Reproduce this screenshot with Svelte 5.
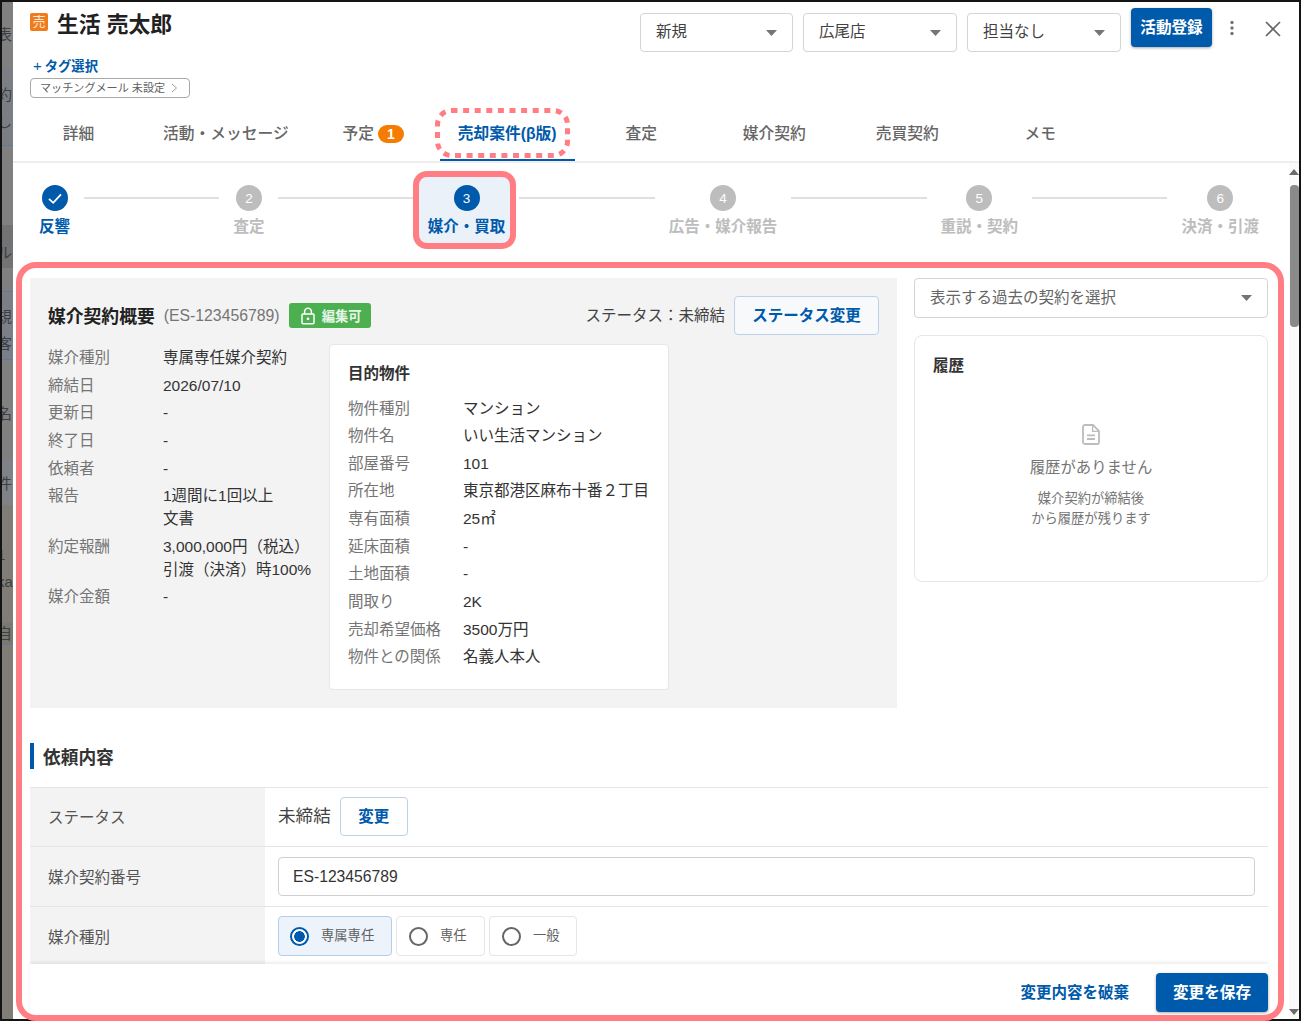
<script>
	const tabs = ['詳細', '活動・メッセージ', '予定', '売却案件(β版)', '査定', '媒介契約', '売買契約', 'メモ'];
	const steps = [
		{ n: 1, label: '反響', state: 'done' },
		{ n: 2, label: '査定', state: '' },
		{ n: 3, label: '媒介・買取', state: 'active' },
		{ n: 4, label: '広告・媒介報告', state: '' },
		{ n: 5, label: '重説・契約', state: '' },
		{ n: 6, label: '決済・引渡', state: '' }
	];
	const contract = [
		['媒介種別', ['専属専任媒介契約']],
		['締結日', ['2026/07/10']],
		['更新日', ['-']],
		['終了日', ['-']],
		['依頼者', ['-']],
		['報告', ['1週間に1回以上', '文書']],
		['約定報酬', ['3,000,000円（税込）', '引渡（決済）時100%']],
		['媒介金額', ['-']]
	];
	const property = [
		['物件種別', 'マンション'],
		['物件名', 'いい生活マンション'],
		['部屋番号', '101'],
		['所在地', '東京都港区麻布十番２丁目'],
		['専有面積', '25㎡'],
		['延床面積', '-'],
		['土地面積', '-'],
		['間取り', '2K'],
		['売却希望価格', '3500万円'],
		['物件との関係', '名義人本人']
	];
	const selects = ['新規', '広尾店', '担当なし'];
	const radios = [
		{ label: '専属専任', w: 114, on: true },
		{ label: '専任', w: 89, on: false },
		{ label: '一般', w: 88, on: false }
	];
	// dimmed page behind the modal, only the left edge is visible
	const bands = [
		{ h: 66, c: '#808080', t: '表', pt: 0 },
		{ h: 78, c: '#7b7f85', t: '約', t2: 'し', line: true, pt: 4 },
		{ h: 79, c: '#808080', t: '', pt: 0 },
		{ h: 43, c: '#737373', t: 'ル', pt: 12 },
		{ h: 24, c: '#808080', t: '', line: true, pt: 0 },
		{ h: 68, c: '#7b7f88', t: '規', t2: '客', line: true, pt: 10 },
		{ h: 100, c: '#808080', t: '名', pt: 8 },
		{ h: 45, c: '#80828a', t: '件', pt: 2 },
		{ h: 118, c: '#7f7d75', t: '1', t2: 'ka', pt: 9 },
		{ h: 22, c: '#7a7870', t: '自', line: true, pt: 0 },
		{ h: 378, c: '#7f7d75', t: '', pt: 0 }
	];
</script>

<div class="page">
	<div class="root">
		<div class="backdrop">
			{#each bands as b}
				<div class="band" class:line={b.line} style="height:{b.h}px;background:{b.c};padding-top:{b.pt}px">
					{#if b.t}<span>{b.t}</span>{/if}
					{#if b.t2}<span>{b.t2}</span>{/if}
				</div>
			{/each}
		</div>

		<div class="modal">
			<header>
				<div class="head-top">
					<div class="who">
						<div class="name-row">
							<span class="kind">売</span>
							<h1>生活 売太郎</h1>
						</div>
						<div class="tag-add"><span class="plus">+</span>タグ選択</div>
						<div class="chip">
							<span>マッチングメール 未設定</span>
							<svg width="7" height="10" viewBox="0 0 7 10" fill="none"><path d="M1 1l4.5 4L1 9" stroke="#9e9e9e" stroke-width="1" /></svg>
						</div>
					</div>
					<div class="actions">
						{#each selects as s}
							<div class="select head-select">
								<span>{s}</span>
								<svg width="11" height="6" viewBox="0 0 11 6"><path d="M0 0h11L5.5 6z" fill="#757575" /></svg>
							</div>
						{/each}
						<button class="primary entry">活動登録</button>
						<svg class="dots" width="6" height="16" viewBox="0 0 6 16"><circle cx="3" cy="2.5" r="1.7" fill="#757575" /><circle cx="3" cy="8" r="1.7" fill="#757575" /><circle cx="3" cy="13.5" r="1.7" fill="#757575" /></svg>
						<svg class="close" width="18" height="18" viewBox="0 0 18 18" fill="none"><path d="M2 2l14 14M16 2L2 16" stroke="#666" stroke-width="1.7" /></svg>
					</div>
				</div>
				<nav>
					{#each tabs as t, i}
						<div class="tab" class:current={i === 3}>
							{t}
							{#if i === 2}<span class="count">1</span>{/if}
							{#if i === 3}
								<svg class="dash" width="135" height="50" viewBox="0 0 135 50" fill="none">
									<rect x="2.5" y="2.5" width="130" height="45" rx="14" stroke="#ff7d83" stroke-width="5" stroke-dasharray="6 5.6" />
								</svg>
							{/if}
						</div>
					{/each}
				</nav>
			</header>

			<div class="body">
				<main>
					<div class="steps">
						{#each steps as s, i}
							{#if i > 0}<div class="step-line"></div>{/if}
							<div class="step {s.state}">
								{#if s.state === 'active'}<div class="step-mark"></div>{/if}
								<div class="circle">
									{#if s.state === 'done'}
										<svg width="16" height="13" viewBox="0 0 16 13" fill="none"><path d="M2 6.8l4.2 4L14 2.4" stroke="#fff" stroke-width="1.8" /></svg>
									{:else}
										{s.n}
									{/if}
								</div>
								<div class="step-label">{s.label}</div>
							</div>
						{/each}
					</div>

					<div class="content">
						<div class="overview">
							<section class="summary">
								<div class="summary-head">
									<h2>媒介契約概要</h2>
									<span class="no">(ES-123456789)</span>
									<span class="editable">
										<svg width="14" height="18" viewBox="0 0 14 18" fill="none">
											<path d="M3.6 7V4.6a3.4 3.4 0 0 1 6.8 0V7" stroke="#fff" stroke-width="1.5" />
											<rect x="1" y="7" width="12" height="9.8" rx="1" stroke="#fff" stroke-width="1.5" />
											<circle cx="7" cy="11.8" r="1.4" fill="#fff" />
										</svg>
										編集可
									</span>
									<span class="status-text">ステータス：未締結</span>
									<button class="outline status-btn">ステータス変更</button>
								</div>
								<div class="summary-body">
									<dl class="contract">
										{#each contract as [k, v]}
											<dt>{k}</dt>
											<dd>
												{#each v as line}<div>{line}</div>{/each}
											</dd>
										{/each}
									</dl>
									<div class="property">
										<h3>目的物件</h3>
										<dl>
											{#each property as [k, v]}
												<dt>{k}</dt>
												<dd>{v}</dd>
											{/each}
										</dl>
									</div>
								</div>
							</section>

							<aside>
								<div class="select past">
									<span>表示する過去の契約を選択</span>
									<svg width="11" height="6" viewBox="0 0 11 6"><path d="M0 0h11L5.5 6z" fill="#757575" /></svg>
								</div>
								<div class="history">
									<h3>履歴</h3>
									<div class="empty">
										<svg width="18" height="21" viewBox="0 0 18 21" fill="none">
											<path d="M2.8 1h8.2L17 7v11.2a1.8 1.8 0 0 1-1.8 1.8H2.8A1.8 1.8 0 0 1 1 18.2V2.8A1.8 1.8 0 0 1 2.8 1z" stroke="#bdbdbd" stroke-width="1.8" />
											<path d="M10.6 1.4V7.4H16.6" stroke="#bdbdbd" stroke-width="1.4" />
											<path d="M5 11.4h8M5 15h8" stroke="#bdbdbd" stroke-width="1.8" />
										</svg>
										<p class="empty-title">履歴がありません</p>
										<p class="empty-note">媒介契約が締結後<br />から履歴が残ります</p>
									</div>
								</div>
							</aside>
						</div>

						<h2 class="section-title">依頼内容</h2>
						<div class="form">
							<div class="form-row">
								<div class="form-label">ステータス</div>
								<div class="form-value status-row">
									<span class="status-val">未締結</span>
									<button class="outline change">変更</button>
								</div>
							</div>
							<div class="form-row">
								<div class="form-label">媒介契約番号</div>
								<div class="form-value">
									<input type="text" value="ES-123456789" />
								</div>
							</div>
							<div class="form-row">
								<div class="form-label">媒介種別</div>
								<div class="form-value radios">
									{#each radios as r}
										<div class="radio" class:on={r.on} style="width:{r.w}px">
											<span class="dot"></span>
											<span class="radio-text">{r.label}</span>
										</div>
									{/each}
								</div>
							</div>
						</div>
					</div>

					<footer>
						<button class="discard">変更内容を破棄</button>
						<button class="primary save">変更を保存</button>
					</footer>
				</main>

				<div class="scrollbar">
					<svg width="10" height="6" viewBox="0 0 10 6"><path d="M5 0l5 6H0z" fill="#6b6b6b" /></svg>
					<div class="thumb"></div>
					<svg class="down" width="10" height="6" viewBox="0 0 10 6"><path d="M0 0h10L5 6z" fill="#6b6b6b" /></svg>
				</div>
			</div>
		</div>

		<div class="focus-box"></div>
	</div>
</div>

<style>
	:global(body) {
		margin: 0;
		background: #fff;
		font-family: 'Liberation Sans', 'Noto Sans CJK JP', sans-serif;
		color: #212121;
	}

	h1,
	h2,
	h3,
	p,
	dl,
	dd {
		margin: 0;
	}

	button {
		font: inherit;
		cursor: pointer;
	}

	.page {
		width: 1301px;
		height: 1021px;
		overflow: hidden;
	}

	.root {
		position: relative;
		box-sizing: border-box;
		height: 1021px;
		border: 2px solid #141414;
		display: flex;
	}

	/* page behind the modal */
	.backdrop {
		width: 11px;
		flex: none;
		overflow: hidden;
	}

	.band {
		box-sizing: border-box;
		width: 11px;
		display: flex;
		flex-direction: column;
		justify-content: center;
		gap: 9px;
		font-size: 15px;
		line-height: 18px;
		color: #3b3f44;
		white-space: nowrap;
		overflow: hidden;
	}

	.band span {
		margin-left: -5px;
	}

	.band.line {
		border-bottom: 1px solid #66799a;
	}

	.modal {
		flex: 1;
		min-width: 0;
		background: #fff;
		display: flex;
		flex-direction: column;
	}

	header {
		flex: none;
		border-bottom: 2px solid #eeeeee;
	}

	.head-top {
		height: 104px;
		display: flex;
		justify-content: space-between;
		padding-left: 17px;
	}

	.who {
		padding-top: 11px;
	}

	.name-row {
		display: flex;
		align-items: center;
		gap: 9px;
		height: 24px;
	}

	.kind {
		width: 18px;
		height: 18px;
		margin-top: -6px;
		background: #f07b1d;
		border-radius: 2px;
		color: #ffe9d6;
		font-size: 13px;
		line-height: 18px;
		text-align: center;
	}

	h1 {
		font-size: 21.8px;
		line-height: 24px;
		font-weight: 700;
		color: #212121;
	}

	.tag-add {
		margin-top: 19px;
		padding-left: 3px;
		font-size: 13.3px;
		line-height: 20px;
		font-weight: 700;
		color: #005aab;
	}

	.plus {
		margin-right: 3px;
		font-size: 15px;
		font-weight: 400;
	}

	.chip {
		box-sizing: border-box;
		width: 160px;
		height: 20px;
		margin-top: 1px;
		padding: 0 11px 0 9px;
		border: 1px solid #a8a8a8;
		border-radius: 4px;
		display: flex;
		align-items: center;
		justify-content: space-between;
		font-size: 11.1px;
		color: #616161;
	}

	.chip span {
		margin-bottom: 2px;
	}

	.actions {
		display: flex;
		align-items: flex-start;
		gap: 10px;
		padding-top: 6px;
	}

	.select {
		box-sizing: border-box;
		display: flex;
		align-items: center;
		justify-content: space-between;
		border: 1px solid #d4d4d4;
		border-radius: 4px;
		font-size: 15.5px;
		color: #424242;
		background: #fff;
	}

	.select span {
		margin-bottom: 5px;
	}

	.head-select {
		width: 154px;
		height: 39px;
		margin-top: 5px;
		padding: 0 15px 0 15px;
	}

	.head-select:first-child {
		width: 153px;
	}

	.primary {
		border: 0;
		border-radius: 4px;
		background: #005aab;
		color: #fff;
		font-weight: 700;
		box-shadow: 0 1px 3px rgba(0, 0, 0, 0.35);
	}

	.entry {
		width: 81px;
		height: 39px;
		padding: 0 0 4px;
		font-size: 15.6px;
	}

	.dots {
		margin: 12px 0 0 7px;
	}

	.close {
		margin: 12px 17px 0 19px;
	}

	nav {
		height: 55px;
		display: flex;
		margin-left: -1px;
	}

	.tab {
		position: relative;
		box-sizing: border-box;
		min-width: 133px;
		padding: 0 18px 2px;
		display: flex;
		align-items: center;
		justify-content: center;
		gap: 4px;
		font-size: 15.75px;
		font-weight: 500;
		color: #666;
		white-space: nowrap;
	}

	.tab.current {
		width: 135px;
		padding: 0;
		color: #005aab;
		font-weight: 700;
		border-bottom: 2px solid #005aab;
	}

	.dash {
		position: absolute;
		left: -5px;
		top: 2px;
	}

	.count {
		width: 26px;
		height: 18px;
		margin-top: 2px;
		border-radius: 9px;
		background: #f57c00;
		color: #fff;
		font-size: 14px;
		font-weight: 700;
		line-height: 18px;
		text-align: center;
	}

	.body {
		flex: 1;
		min-height: 0;
		display: flex;
	}

	main {
		position: relative;
		flex: 1;
		min-width: 0;
		overflow: hidden;
	}

	.steps {
		box-sizing: border-box;
		height: 100px;
		padding: 22px 30px 0 26px;
		display: flex;
		align-items: flex-start;
		gap: 14px;
	}

	.step-line {
		flex: 1;
		height: 2px;
		margin-top: 12px;
		background: #e0e0e0;
	}

	.step {
		position: relative;
		display: flex;
		flex-direction: column;
		align-items: center;
		color: #bdbdbd;
	}

	.step-mark {
		position: absolute;
		inset: -14px -11px -11px -15px;
		border: 6px solid #ff7d83;
		border-radius: 14px;
		background: #eaf1f8;
	}

	.circle {
		position: relative;
		width: 26px;
		height: 26px;
		border-radius: 50%;
		background: #bdbdbd;
		color: #fff;
		font-size: 13.5px;
		display: flex;
		align-items: center;
		justify-content: center;
	}

	.step-label {
		position: relative;
		margin-top: 5px;
		font-size: 15.5px;
		line-height: 22px;
		font-weight: 700;
		white-space: nowrap;
	}

	.step.done,
	.step.active {
		color: #005aab;
	}

	.step.done .circle,
	.step.active .circle {
		background: #005aab;
	}

	.content {
		padding: 15px 21px 0 17px;
	}

	.overview {
		display: flex;
		gap: 17px;
		align-items: flex-start;
	}

	.summary {
		flex: 1;
		min-width: 0;
		box-sizing: border-box;
		height: 430px;
		padding: 18px;
		background: #f3f3f3;
	}

	.summary-head {
		height: 39px;
		display: flex;
		align-items: center;
	}

	.summary-head h2 {
		margin-bottom: 2px;
		font-size: 17.8px;
		font-weight: 700;
		color: #212121;
	}

	.no {
		margin-left: 9px;
		font-size: 15.8px;
		color: #757575;
	}

	.editable {
		margin-left: 9px;
		width: 82px;
		height: 25px;
		box-sizing: border-box;
		padding-left: 12px;
		display: flex;
		align-items: center;
		gap: 7px;
		background: #4caf50;
		border-radius: 3px;
		color: #e8f5e9;
		font-size: 13.3px;
		font-weight: 700;
	}

	.status-text {
		margin-left: auto;
		margin-bottom: 4px;
		font-size: 15.5px;
		color: #424242;
	}

	.outline {
		box-sizing: border-box;
		height: 39px;
		padding: 0 0 4px;
		background: #fff;
		border: 1px solid #bcd2e8;
		border-radius: 4px;
		color: #005aab;
		font-size: 15.5px;
		font-weight: 700;
	}

	.status-btn {
		width: 145px;
		margin-left: 9px;
		background: #f7f9fb;
	}

	.summary-body {
		display: flex;
		margin-top: 9px;
	}

	dl {
		display: grid;
		grid-template-columns: 115px 1fr;
		row-gap: 4.65px;
		font-size: 15.5px;
		line-height: 23px;
	}

	dt {
		color: #757575;
	}

	dd {
		color: #333;
		white-space: nowrap;
	}

	.contract {
		width: 281px;
		flex: none;
		align-self: flex-start;
		margin-top: 2px;
	}

	.property {
		box-sizing: border-box;
		width: 340px;
		height: 346px;
		padding: 17px 18px;
		background: #fff;
		border: 1px solid #e6e6e6;
		border-radius: 4px;
	}

	h3 {
		font-size: 15.5px;
		line-height: 23px;
		font-weight: 700;
		color: #333;
	}

	.property h3 {
		margin-bottom: 11.5px;
	}

	aside {
		width: 354px;
		flex: none;
	}

	.past {
		height: 40px;
		padding: 0 15px 0 15px;
		color: #666;
	}

	.history {
		box-sizing: border-box;
		height: 247px;
		margin-top: 17px;
		padding: 18px;
		border: 1px solid #e6e6e6;
		border-radius: 8px;
	}

	.empty {
		display: flex;
		flex-direction: column;
		align-items: center;
		padding-top: 47px;
	}

	.empty-title {
		margin-top: 11px;
		font-size: 15.4px;
		line-height: 23px;
		color: #757575;
	}

	.empty-note {
		margin-top: 10px;
		font-size: 13.3px;
		line-height: 20px;
		color: #757575;
		text-align: center;
	}

	.section-title {
		margin: 35px 0 0;
		height: 26px;
		padding-left: 9px;
		border-left: 4px solid #005aab;
		font-size: 17.7px;
		line-height: 30px;
		font-weight: 700;
		color: #333;
	}

	.form {
		margin-top: 18px;
		border-top: 1px solid #e5e5e5;
	}

	.form-row {
		box-sizing: border-box;
		height: 60px;
		display: flex;
		border-bottom: 1px solid #e5e5e5;
	}

	.form-row:first-child {
		height: 59px;
	}

	.form-label {
		box-sizing: border-box;
		width: 235px;
		flex: none;
		padding: 0 0 2px 18px;
		display: flex;
		align-items: center;
		background: #f3f3f3;
		font-size: 15.5px;
		color: #555;
	}

	.form-value {
		flex: 1;
		min-width: 0;
		padding: 0 13px;
		display: flex;
		align-items: center;
		gap: 9px;
	}

	.status-row {
		padding-bottom: 1px;
	}

	.status-val {
		margin-bottom: 4px;
		font-size: 17.6px;
		color: #424242;
	}

	.change {
		width: 68px;
	}

	input {
		box-sizing: border-box;
		width: 100%;
		height: 39px;
		padding: 0 14px;
		border: 1px solid #d0d0d0;
		border-radius: 4px;
		font: inherit;
		font-size: 15.7px;
		color: #333;
	}

	.radios {
		gap: 4px;
		padding-bottom: 1px;
	}

	.radio {
		box-sizing: border-box;
		height: 40px;
		padding-left: 12px;
		display: flex;
		align-items: center;
		gap: 12px;
		border: 1px solid #e6e6e6;
		border-radius: 4px;
		font-size: 13.3px;
		color: #616161;
	}

	.radio-text {
		margin-bottom: 3px;
	}

	.radio.on {
		padding-left: 11px;
		background: #edf3fb;
		border-color: #b4cdea;
	}

	.dot {
		box-sizing: border-box;
		width: 19px;
		height: 19px;
		border-radius: 50%;
		border: 2px solid #666;
		background: #fff;
	}

	.radio.on .dot {
		border-color: #005aab;
		background: radial-gradient(circle, #005aab 0 5px, #fff 5.6px);
	}

	footer {
		position: absolute;
		left: 17px;
		right: 21px;
		bottom: 0;
		box-sizing: border-box;
		height: 55px;
		padding-top: 9px;
		display: flex;
		justify-content: flex-end;
		align-items: flex-start;
		gap: 27px;
		background: #fff;
		box-shadow: 0 -2px 3px rgba(0, 0, 0, 0.07);
	}

	.discard {
		height: 39px;
		padding: 0 0 4px;
		border: 0;
		background: none;
		color: #005aab;
		font-size: 15.5px;
		font-weight: 700;
	}

	.save {
		width: 112px;
		height: 39px;
		padding: 0 0 4px;
		font-size: 15.6px;
	}

	.scrollbar {
		width: 10px;
		flex: none;
		display: flex;
		flex-direction: column;
		align-items: center;
		padding-top: 6px;
		box-sizing: border-box;
		background: #fafafa;
	}

	.thumb {
		width: 9px;
		height: 142px;
		margin-top: 10px;
		border-radius: 4px;
		background: #8a8a8a;
	}

	.down {
		margin: auto 0 4px;
	}

	/* highlight drawn over the content */
	.focus-box {
		position: absolute;
		left: 14px;
		right: 15px;
		top: 260px;
		bottom: -2px;
		border: 6px solid #ff7d83;
		border-radius: 20px;
		pointer-events: none;
	}
</style>
